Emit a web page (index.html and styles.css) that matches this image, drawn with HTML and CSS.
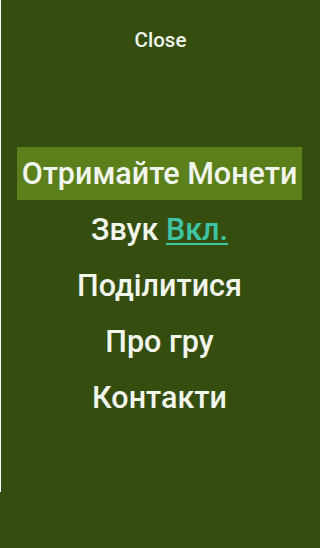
FILE: index.html
```html
<!DOCTYPE html>
<html lang="uk">
<head>
    <meta charset="UTF-8">
    <meta name="viewport" content="width=device-width, initial-scale=1.0">
    <title>Menu</title>
    <link rel="stylesheet" href="styles.css">
</head>
<body>
    <div class="frame">
        <div class="close-button">Close</div>
        <ul class="menu">
            <li class="menu-item active">Отримайте Монети</li>
            <li class="menu-item">Звук <a class="sound-state" href="#">Вкл.</a></li>
            <li class="menu-item">Поділитися</li>
            <li class="menu-item">Про гру</li>
            <li class="menu-item">Контакти</li>
        </ul>
    </div>
</body>
</html>
```

FILE: styles.css
```css
body {
    margin: 0;
    font-family: 'Roboto', sans-serif;
    background-color: #354e0f;
    color: #f2f5ec;
}

.frame {
    height: 492px;
    border-left: 1px solid #ffffff;
}

.close-button {
    padding-top: 28px;
    text-align: center;
    font-size: 20.5px;
    line-height: 24px;
    font-weight: 500;
}

.menu {
    list-style: none;
    margin: 95px 18px 0 16px;
    padding: 0;
    display: flex;
    flex-direction: column;
    gap: 3px;
}

.menu-item {
    text-align: center;
    font-size: 30.5px;
    line-height: 53px;
    font-weight: 500;
}

.menu-item.active {
    background-color: #5b7f1b;
}

.sound-state {
    color: #3cc4a4;
    text-decoration: underline;
    text-decoration-thickness: 2px;
    text-underline-offset: 3px;
}
```
